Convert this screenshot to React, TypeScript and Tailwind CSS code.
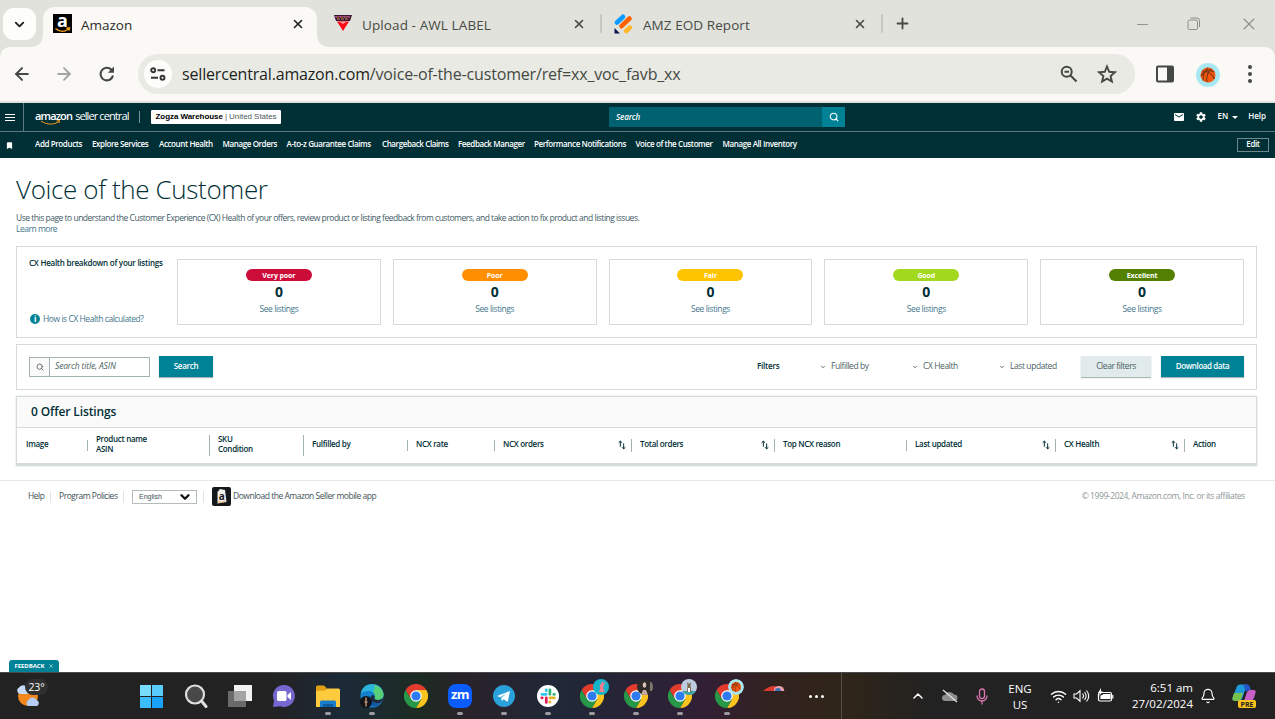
import { ReactNode } from 'react';
import { ArrowLeft, ArrowRight, Bell, ChevronDown, ChevronUp, Minus, Plus, Search, Wifi, X } from 'lucide-react';
import { MdBookmark, MdMail, MdSettings } from 'react-icons/md';

const navLinks = [
  { label: 'Add Products', width: 'w-[57px]' },
  { label: 'Explore Services', width: 'w-[67px]' },
  { label: 'Account Health', width: 'w-[63.5px]' },
  { label: 'Manage Orders', width: 'w-[64px]' },
  { label: 'A-to-z Guarantee Claims', width: 'w-[95.5px]' },
  { label: 'Chargeback Claims', width: 'w-[76px]' },
  { label: 'Feedback Manager', width: 'w-[76px]' },
  { label: 'Performance Notifications', width: 'w-[101.5px]' },
  { label: 'Voice of the Customer', width: 'w-[87px]' },
  { label: 'Manage All Inventory', width: 'w-[90px]' },
];

const healthCards = [
  { label: 'Very poor', color: 'bg-[#cc0c39]' },
  { label: 'Poor', color: 'bg-[#ff8f00]' },
  { label: 'Fair', color: 'bg-[#ffc400]' },
  { label: 'Good', color: 'bg-[#a2d81e]' },
  { label: 'Excellent', color: 'bg-[#538000]' },
];

const columns = [
  { lines: ['Image'], width: 'w-[70px]', bar: 'h-[11px]' },
  { lines: ['Product name', 'ASIN'], width: 'w-[122px]', bar: 'h-[21px]' },
  { lines: ['SKU', 'Condition'], width: 'w-[94px]', bar: 'h-[21px]' },
  { lines: ['Fulfilled by'], width: 'w-[104px]', bar: 'h-[11px]' },
  { lines: ['NCX rate'], width: 'w-[87px]', bar: 'h-[11px]' },
  { lines: ['NCX orders'], width: 'w-[137px]', bar: 'h-[13px]', sort: true },
  { lines: ['Total orders'], width: 'w-[143px]', bar: 'h-[13px]', sort: true },
  { lines: ['Top NCX reason'], width: 'w-[132px]', bar: 'h-[11px]' },
  { lines: ['Last updated'], width: 'w-[149px]', bar: 'h-[13px]', sort: true },
  { lines: ['CX Health'], width: 'w-[129px]', bar: 'h-[13px]', sort: true },
  { lines: ['Action'], width: 'w-[70px]' },
];

const AmazonIcon = () => (
  <div className="relative h-[19px] w-[19px] bg-black">
    <span className="absolute inset-x-0 -top-[5px] text-center text-[18px] leading-[22px] font-bold text-white">a</span>
    <svg className="absolute inset-0" width="19" height="19" viewBox="0 0 19 19" fill="none">
      <path d="M2.5 14.5c4 3.500 9 3.500 13 .500M13.500 14.200l3-.3-.6 2.8" stroke="#f7a01c" strokeWidth="1.4" />
    </svg>
  </div>
);

const LabelIcon = () => (
  <svg width="18" height="17" viewBox="0 0 18 17">
    <path d="M0 0h18l-2 6H2z" fill="#3b1630" />
    <path d="M2 2h14M3 4h12" stroke="#d58a54" strokeWidth="1" strokeDasharray="3 1" />
    <path d="M1 1.5h16" stroke="#b14ab0" strokeWidth="1" strokeDasharray="2 2" />
    <path d="M3 6.5h12L9 16z" fill="#fb0a16" />
    <path d="M6 7h6l-3 2z" fill="#fff" opacity=".6" />
  </svg>
);

const JotformIcon = () => (
  <svg width="19" height="20" viewBox="0 0 19 20" strokeLinecap="round">
    <path d="M3 8.5 9 2.8" stroke="#0a9bff" strokeWidth="4.6" />
    <path d="M7.5 12.2 15.5 4.5" stroke="#ff6100" strokeWidth="4.6" />
    <path d="M12.2 17 15.8 13.6" stroke="#ffb629" strokeWidth="4.6" />
    <path d="M.5 14v5.5H6z" fill="#0a1551" />
  </svg>
);

const Basketball = ({ size = 24 }: { size?: number }) => (
  <svg width={size} height={size} viewBox="0 0 24 24" fill="none">
    <circle cx="12" cy="12" r="12" fill="#a8e8f2" />
    <circle cx="12" cy="12" r="7.5" fill="#f4580f" />
    <path d="M6 8c5 0 11 3 12.5 8M12 4.5C8 9 6.500 13 7.200 17.500M15 5.500c-4 5-5 9-4 13.500M5 13c4-6 9-7 13-4" stroke="#7a3417" strokeWidth="1.100" />
  </svg>
);

const TabDivider = () => <div className="h-[19px] w-[2px] rounded bg-[#c6c7c2]" />;

const TabStrip = () => (
  <div className="flex h-[47px] bg-[#e1e2dc] text-[13.5px] text-[#474a45]">
    <div className="w-[43px] bg-[#faf9f5]">
      <div className="h-full rounded-br-[12px] bg-[#e1e2dc] pt-2 pl-[3px]">
        <div className="flex h-8 w-[33px] items-center justify-center rounded-[11px] bg-[#fdfdfa]">
          <ChevronDown size={15} strokeWidth={3} color="#20221f" />
        </div>
      </div>
    </div>
    <div className="flex w-[274px] pt-[7px]">
      <div className="flex w-full items-center rounded-t-[12px] bg-[#faf9f5] pr-3 pb-[7px] pl-[10px]">
        <AmazonIcon />
        <span className="mt-[3px] ml-[9px] text-[#2a2c29]">Amazon</span>
        <X className="ml-auto" size={14} strokeWidth={2.8} color="#20221f" />
      </div>
    </div>
    <div className="flex-1 bg-[#faf9f5]">
      <div className="flex h-full items-center rounded-bl-[12px] bg-[#e1e2dc]">
        <div className="flex w-[283px] items-center pl-[17px]">
          <LabelIcon />
          <span className="mt-[3px] ml-[10px] tracking-[0.1px]">Upload - AWL LABEL</span>
          <X className="mr-[14px] ml-auto" size={14} strokeWidth={2.8} />
        </div>
        <TabDivider />
        <div className="flex w-[279px] items-center pl-3">
          <JotformIcon />
          <span className="mt-[3px] ml-[10px] tracking-[0.07px]">AMZ EOD Report</span>
          <X className="mr-[14px] ml-auto" size={14} strokeWidth={2.8} />
        </div>
        <TabDivider />
        <Plus className="ml-[11px]" size={17} strokeWidth={2.6} />
        <div className="mt-px ml-auto flex items-center pr-[16px] text-[#8b8d88]">
          <Minus size={17} strokeWidth={1.3} />
          <svg className="ml-9" width="14" height="14" viewBox="0 0 14 14" fill="none" stroke="currentColor">
            <rect x="1" y="3" width="9.500" height="9.500" rx="1.500" />
            <path d="M3.500 1h6.500a2.500 2.500 0 0 1 2.500 2.500v6.500" />
          </svg>
          <X className="ml-[38px]" size={20} strokeWidth={1.3} />
        </div>
      </div>
    </div>
  </div>
);

const Toolbar = () => (
  <div className="bg-[#e1e2dc]">
    <div className="flex h-[54px] items-center rounded-t-[10px] bg-[#faf9f5] text-[#454943]">
      <ArrowLeft className="ml-[12px]" size={20} strokeWidth={2.4} />
      <ArrowRight className="ml-[22px]" size={20} strokeWidth={2.2} color="#a3a5a0" />
      <svg className="ml-[24px]" width="18" height="18" viewBox="0 0 18 18" fill="none">
        <path d="M15 10.500A6.300 6.300 0 1 1 13.300 4.600L15 6.300" stroke="currentColor" strokeWidth="2.100" />
        <path d="M16 1.500v6.300H9.800z" fill="currentColor" />
      </svg>
      <div className="ml-[22px] flex h-10 w-[997px] items-center rounded-full bg-[#e9eae4] pl-1.5">
        <div className="flex h-7 w-7 items-center justify-center rounded-full bg-[#fdfdfa]">
          <svg width="16" height="14" viewBox="0 0 16 14" fill="none" stroke="#333631" strokeWidth="1.900">
            <circle cx="3.200" cy="3.200" r="2" />
            <path d="M7.500 3.200h7M1 10.800h7" />
            <circle cx="12.500" cy="10.800" r="2" />
          </svg>
        </div>
        <span className="ml-[10px] text-[16px] tracking-[-0.17px] whitespace-nowrap">
          <span className="text-[#1d1f1b]">sellercentral.amazon.com</span>/voice-of-the-customer/ref=xx_voc_favb_xx
        </span>
        <svg className="ml-auto" width="18" height="18" viewBox="0 0 18 18" fill="none" stroke="currentColor" strokeWidth="2">
          <circle cx="6.700" cy="6.700" r="5" />
          <path d="m10.500 10.500 6 6M4.500 6.700h4.500" />
        </svg>
        <svg className="mr-[18px] ml-[19px]" width="20" height="20" viewBox="0 0 20 20" fill="none" stroke="currentColor" strokeWidth="1.900">
          <path d="m10 2.500 2.200 5.300 5.700.500-4.300 3.700 1.300 5.600-4.900-3-4.900 3 1.300-5.600-4.300-3.700 5.700-.500z" />
        </svg>
      </div>
      <svg className="ml-[21px]" width="18" height="18" viewBox="0 0 18 18">
        <rect x="1" y="1.500" width="16" height="15" rx="1" fill="none" stroke="currentColor" strokeWidth="2" />
        <path d="M11 1h6v16h-6z" fill="currentColor" />
      </svg>
      <div className="mt-[2px] ml-[22px]">
        <Basketball />
      </div>
      <div className="ml-[28px] flex flex-col gap-[3px]">
        <i className="h-1 w-1 rounded-full bg-[#454943]" />
        <i className="h-1 w-1 rounded-full bg-[#454943]" />
        <i className="h-1 w-1 rounded-full bg-[#454943]" />
      </div>
    </div>
    <div className="h-[2px] bg-[#e1e0dc]" />
  </div>
);

const SellerHeader = () => (
  <header className="bg-[#002f36] text-white">
    <div className="flex h-[29px] items-center border-b border-[#5f7a7e] text-[8px]">
      <div className="flex h-full w-6 items-center border-r border-[#5f7a7e] pl-[5px]">
        <div className="flex w-[10px] flex-col gap-[2px]">
          <i className="h-px bg-white" />
          <i className="h-px bg-white" />
          <i className="h-px bg-white" />
        </div>
      </div>
      <div className="relative mb-[2px] ml-[11px] w-[104px] text-[11px] leading-[14px] whitespace-nowrap">
        <span className="mr-[3px] font-semibold tracking-[-0.85px]">amazon</span>
        <span className="tracking-[-0.9px]">seller central</span>
        <svg className="absolute top-[11px] left-[5px]" width="22" height="6" viewBox="0 0 22 6" fill="none" stroke="#f59a1b">
          <path d="M1 1c6 4 13 4 18 .500M16.500 1l3-.500-.500 2.500" />
        </svg>
      </div>
      <div className="h-3 w-px bg-[#7d9295]" />
      <div className="ml-[11px] flex h-[14px] w-[130px] items-center justify-center rounded-[1px] bg-white font-['Liberation_Sans',sans-serif] text-[8px] tracking-[-0.05px] whitespace-nowrap text-[#4c5a5c]">
        <span className="mr-[2px] font-bold text-black">Zogza Warehouse</span> | United States
      </div>
      <div className="ml-[328px] flex h-5 w-[213px] items-center bg-[#006170] pl-[7px] font-semibold tracking-[-0.1px] italic">
        Search
      </div>
      <div className="flex h-5 w-[23px] items-center justify-center bg-[#008296]">
        <Search size={10} strokeWidth={2.6} />
      </div>
      <MdMail className="ml-auto" size={12} />
      <MdSettings className="ml-[10px]" size={12} />
      <span className="mb-[2px] ml-[10px] font-semibold">EN</span>
      <i className="ml-1 h-0 w-0 border-x-[3px] border-t-[3px] border-x-transparent border-t-white" />
      <span className="mr-[9px] mb-[2px] ml-[10px] font-semibold">Help</span>
    </div>
    <div className="flex h-[26px] items-center text-[8px] font-semibold tracking-[-0.39px] whitespace-nowrap">
      <div className="w-[35px] pl-[5px]">
        <MdBookmark size={9} />
      </div>
      {navLinks.map((link) => (
        <a key={link.label} className={`${link.width} shrink-0 pb-[2px]`}>
          {link.label}
        </a>
      ))}
      <button className="mr-[6px] ml-auto h-[14px] w-8 border border-[#6f888b] pb-[2px] leading-[10px]">Edit</button>
    </div>
  </header>
);

const HealthPanel = () => (
  <section className="flex h-[92px] border border-[#d5dbdb] p-3">
    <div className="flex w-[148px] flex-col justify-between text-[8px] leading-[10px] tracking-[-0.25px] whitespace-nowrap">
      <h2 className="-mt-px font-semibold">CX Health breakdown of your listings</h2>
      <a className="mb-px flex items-center text-[8.5px] tracking-[-0.45px] text-[#45788c]">
        <span className="mr-[3px] ml-px flex h-[10px] w-[10px] items-center justify-center rounded-full bg-[#008296] text-[8px] font-bold text-white">
          i
        </span>
        <span>How is CX Health calculated?</span>
      </a>
    </div>
    <div className="grid flex-1 grid-cols-5 gap-3">
      {healthCards.map((card) => (
        <div key={card.label} className="flex flex-col items-center border border-[#d5dbdb] pt-[9px]">
          <span
            className={`${card.color} h-3 w-[66px] rounded-full text-center text-[7px] leading-[13px] font-bold tracking-[-0.1px] text-white`}
          >
            {card.label}
          </span>
          <span className="mt-[3px] text-[14px] leading-[15px] font-bold">0</span>
          <a className="mt-[5px] text-[8.5px] leading-[10px] tracking-[-0.4px] text-[#45788c]">See listings</a>
        </div>
      ))}
    </div>
  </section>
);

const Filter = ({ label, width }: { label: string; width: string }) => (
  <div className={`flex items-center ${width}`}>
    <ChevronDown className="mr-[5px]" size={6} strokeWidth={3.500} />
    <span>{label}</span>
  </div>
);

const SearchPanel = () => (
  <section className="mt-[6px] flex h-[46px] items-center border border-[#d5dbdb] px-3 pb-px text-[8.5px] tracking-[-0.42px] whitespace-nowrap text-[#4c5f64]">
    <div className="flex h-5 w-[121px] items-center border border-[#a2b1b1]">
      <div className="flex h-full w-5 items-center justify-center border-r border-[#a2b1b1] bg-[#fafafa]">
        <Search size={8} strokeWidth={2.5} />
      </div>
      <span className="ml-[5px] text-[8.5px] tracking-[-0.15px] italic">Search title, ASIN</span>
    </div>
    <button className="ml-[9px] h-[21px] w-[54px] bg-[#008296] pb-px text-[8px] font-semibold tracking-[-0.25px] text-white shadow-[0_1px_1px_#aab7b8]">
      Search
    </button>
    <span className="mb-[2px] ml-auto w-[63px] text-[8px] font-semibold tracking-[-0.2px] text-[#002f36]">Filters</span>
    <Filter label="Fulfilled by" width="w-[92px]" />
    <Filter label="CX Health" width="w-[87px]" />
    <Filter label="Last updated" width="w-[82px]" />
    <button className="h-[21px] w-[70px] bg-[#e1ebec] shadow-[0_1px_1px_#aab7b8]">Clear filters</button>
    <button className="ml-[10px] h-[21px] w-[83px] bg-[#008296] pb-px text-[8px] font-semibold tracking-[-0.4px] text-white shadow-[0_1px_1px_#aab7b8]">
      Download data
    </button>
  </section>
);

const ListingsTable = () => (
  <section className="mt-[6px] border border-b-[3px] border-[#d5dbdb] shadow-[0_0_2px_#d5dbdb]">
    <h2 className="h-[31px] border-b border-[#d5dbdb] bg-[#fafafa] pl-[14px] text-[12px] leading-[30px] font-semibold tracking-[-0.12px]">
      0 Offer Listings
    </h2>
    <div className="flex h-[35px] items-center pl-[9px] text-[8px] leading-[10px] font-semibold tracking-[-0.3px] whitespace-nowrap">
      {columns.map((col) => (
        <div key={col.lines[0]} className={`${col.width} flex shrink-0 items-center`}>
          <div className={col.sort ? 'pb-[4px]' : 'pb-[3px]'}>
            {col.lines.map((line) => (
              <div key={line}>{line}</div>
            ))}
          </div>
          {col.sort && (
            <svg className="mr-[5px] mb-[2px] ml-auto" width="8" height="10" viewBox="0 0 7 9" fill="none" stroke="currentColor">
              <path d="M2 6V1M.500 2.500 2 1l1.500 1.500M5 3v5M3.500 6.500 5 8l1.500-1.500" strokeWidth=".9" />
            </svg>
          )}
          {col.bar && <i className={`${col.bar} ${col.sort ? '' : 'ml-auto'} mr-2 w-px bg-[#a2b1b1]`} />}
        </div>
      ))}
    </div>
  </section>
);

const Footer = () => (
  <footer className="mt-[14px] flex h-8 items-center border-t border-[#e7e9e9] pl-7 text-[8.5px] tracking-[-0.48px] whitespace-nowrap text-[#3f5357]">
    <span className="w-[22px]">Help</span>
    <i className="h-3 w-px bg-[#dfe3e3]" />
    <span className="ml-2 w-[64px]">Program Policies</span>
    <i className="h-3 w-px bg-[#dfe3e3]" />
    <div className="ml-2 flex h-[14px] w-[65px] items-center justify-between border border-[#b4bcbc] pr-[4px] pl-[6px] font-['Liberation_Sans',sans-serif] text-[7px] tracking-normal">
      <span className="mt-px">English</span>
      <ChevronDown size={14} strokeWidth={4} color="#111" />
    </div>
    <i className="ml-[6px] h-3 w-px bg-[#dfe3e3]" />
    <svg className="ml-2" width="19" height="19" viewBox="0 0 19 19">
      <rect width="19" height="19" rx="2" fill="#16191b" />
      <path d="M5.500 5 8 2l5 1 1.500 12-9 1.500z" fill="#f4f1ec" />
      <path d="M6 14.500c3 1.500 5 1 7.500-1" stroke="#e9a050" fill="none" />
      <text x="6.800" y="12.500" fontSize="10" fontWeight="700" fill="#16191b">
        a
      </text>
    </svg>
    <span className="ml-[2px]">Download the Amazon Seller mobile app</span>
    <span className="mr-[30px] mb-px ml-auto tracking-[-0.42px] text-[#8f9899]">
      © 1999-2024, Amazon.com, Inc. or its affiliates
    </span>
  </footer>
);

const ChromeLogo = () => (
  <svg width="24" height="24" viewBox="0 0 24 24">
    <path d="M1.600 6A12 12 0 0 1 22.400 6H12v6l-5.200 3z" fill="#e33b2e" />
    <path d="M22.400 6A12 12 0 0 1 12 24l5.200-9-5.200-3V6z" fill="#fcc31e" />
    <path d="M12 24A12 12 0 0 1 1.600 6l5.200 9 5.200-3 5.200 3z" fill="#279847" />
    <circle cx="12" cy="12" r="5.800" fill="#fff" />
    <circle cx="12" cy="12" r="4.600" fill="#2e7bf0" />
  </svg>
);

const ChromeProfile = ({ children }: { children: ReactNode }) => (
  <div className="relative">
    <ChromeLogo />
    <div className="absolute -top-[5px] left-[13px] h-4 w-4 overflow-hidden rounded-full">{children}</div>
  </div>
);

const TaskItem = ({ children, running, width = 'w-11' }: { children: ReactNode; running?: boolean; width?: string }) => (
  <div className={`relative flex h-full shrink-0 items-center justify-center ${width}`}>
    {children}
    {running && <i className="absolute bottom-[4px] h-[3px] w-[6px] rounded-full bg-[#9c9ca0]" />}
  </div>
);

const Taskbar = () => (
  <div className="flex h-[47px] items-center border-t border-[#4a4a4a] bg-[linear-gradient(90deg,#222_0,#222_270px,#1c2a38_345px,#1c2b22_420px,#29222a_465px,#202838_560px,#2a2237_650px,#321f35_705px,#32221f_770px,#2f2519_850px,#222_930px)] text-white">
    <div className="relative w-[129px] pl-[15px]">
      <svg width="34" height="26" viewBox="0 0 34 26">
        <circle cx="13" cy="13" r="10" fill="#f2881d" />
        <path d="M5 11a3.500 3.500 0 0 1-1-6.500A5 5 0 0 1 12 4l1 7z" fill="#c7dafb" />
        <path d="M13 23a3.500 3.500 0 0 1 .500-6 4.500 4.500 0 0 1 8 0 3.200 3.200 0 0 1 .500 6z" fill="#b5cdf6" />
      </svg>
      <span className="absolute -top-[4px] left-[25px] flex h-4 w-[23px] items-center justify-center rounded-full bg-[#303030] text-[10.5px] leading-4 tracking-[-0.2px]">
        23°
      </span>
    </div>
    <TaskItem>
      <div className="grid grid-cols-2 gap-px">
        <i className="h-[11px] w-[11px] bg-[#77dcff]" />
        <i className="h-[11px] w-[11px] bg-[#58ccfc]" />
        <i className="h-[11px] w-[11px] bg-[#3cbefb]" />
        <i className="h-[11px] w-[11px] bg-[#1aa2f8]" />
      </div>
    </TaskItem>
    <TaskItem>
      <svg className="ml-px" width="24" height="24" viewBox="0 0 24 24" fill="none" stroke="#dedede">
        <circle cx="11" cy="10.500" r="9" strokeWidth="2.200" fill="#484848" />
        <path d="m17.500 17 4.500 5.500" strokeWidth="3" strokeLinecap="round" />
      </svg>
    </TaskItem>
    <TaskItem>
      <svg className="ml-[2px]" width="24" height="24" viewBox="0 0 24 24">
        <rect x="6" y="1" width="18" height="16" fill="#f1f1f1" />
        <rect x="0" y="7" width="18" height="16" fill="#6a6a6a" />
        <rect x="6" y="7" width="12" height="10" fill="#a3a3a3" />
      </svg>
    </TaskItem>
    <TaskItem>
      <svg className="ml-[2px]" width="24" height="24" viewBox="0 0 24 24">
        <path d="M12 1a11 11 0 1 1-4 21.300L1 23l1-6.300A11 11 0 0 1 12 1z" fill="#7467cf" />
        <rect x="5" y="7" width="9.500" height="10" rx="1.500" fill="#fff" />
        <path d="m15.500 11 3.500-3v8l-3.500-3z" fill="#fff" />
      </svg>
    </TaskItem>
    <TaskItem running width="ml-px w-11">
      <svg width="24" height="23" viewBox="0 0 24 23">
        <path d="M0 2q0-1.500 1.500-1.500H8L10.500 3v4H0z" fill="#e1a112" />
        <path d="M0 6l9-.500L11 3.500h11.500Q24 3.500 24 5v17H0z" fill="#fdcb3d" />
        <path d="M4 22v-5q0-1.500 1.500-1.500h13q1.500 0 1.500 1.500v5z" fill="#1a7dcb" />
        <path d="M7 19h10v3H7z" fill="#0f5d9e" />
      </svg>
    </TaskItem>
    <TaskItem running>
      <svg width="24" height="24" viewBox="0 0 24 24">
        <circle cx="12" cy="12" r="11.500" fill="#1580cd" />
        <path d="M.8 9.500C3-3 21-3 23.400 9c1 5.500-4.400 8.500-8.900 6 2.500-4-1-8-6-8-3.500 0-6.500 1-7.700 2.500z" fill="#2bb5dc" />
        <path d="M14 .900c6 1 9.800 6 9.500 10-.3 5-5.500 6.100-9 4.100 1.500-3 0-5.500-1.500-7C15 5 15 3 14 .900z" fill="#58d078" />
        <path d="M14.500 15c3 1.500 6 1.200 8.200-1 .3 1.700-1 3.500-2.700 5-4.500 1.500-9-.500-9.500-5 0-1.500 1-3 2.500-3 1.800 1 2 2.500 1.500 4z" fill="#1f2b3a" />
        <path d="M9 12c-2.500 4-.5 9.500 5 10.500 3-.500 5-2 6-3.500-4 1-9.500-1-9.500-6z" fill="#135aa6" />
        <circle cx="6" cy="18" r="6" fill="#101418" />
        <path d="M6 13.500v9M4.500 18h3" stroke="#bd8f72" strokeWidth="1.500" />
      </svg>
    </TaskItem>
    <TaskItem>
      <ChromeLogo />
    </TaskItem>
    <TaskItem running>
      <div className="h-6 w-6 rounded-[8px] bg-[#0b5cff] text-center text-[13px] leading-[21px] font-bold tracking-[-0.5px]">
        zm
      </div>
    </TaskItem>
    <TaskItem running>
      <svg width="22" height="22" viewBox="0 0 22 22">
        <circle cx="11" cy="11" r="11" fill="#2aa1da" />
        <path d="m4 11 13-5-2.300 11-4-2.800-2 1.800-.400-3.300L14 8.200l-6.800 4z" fill="#fff" />
      </svg>
    </TaskItem>
    <TaskItem running>
      <svg width="22" height="22" viewBox="0 0 22 22" fill="none" strokeWidth="2.800" strokeLinecap="round">
        <circle cx="11" cy="11" r="11" fill="#fff" />
        <path d="M9.300 4.800v1M4.800 9.300h4.500" stroke="#36c5f0" />
        <path d="M16.800 9.300h.6M12.900 9.300V4.800" stroke="#2eb67d" />
        <path d="M12.900 16.800v.4M12.900 12.900h4.500" stroke="#ecb22e" />
        <path d="M4.800 12.900h.4M9.300 12.900v4.500" stroke="#e01e5a" />
      </svg>
    </TaskItem>
    <TaskItem running>
      <ChromeProfile>
        <svg width="16" height="16" viewBox="0 0 16 16">
          <path d="M0 0h16v16H0z" fill="#14b5cb" />
          <path d="M9.500 2.500 9 6M12 3.500 9.500 6.500" stroke="#f47c8c" strokeWidth="1.300" />
          <circle cx="8.500" cy="7" r="2" fill="#f47c8c" />
          <path d="M7.500 8h2.500l1.500 5H6z" fill="#f47c8c" />
        </svg>
      </ChromeProfile>
    </TaskItem>
    <TaskItem running>
      <ChromeProfile>
        <svg width="16" height="16" viewBox="0 0 16 16">
          <path d="M0 0h16v16H0z" fill="#302b2b" />
          <path d="M13 3h3v9h-3z" fill="#80766f" />
          <ellipse cx="7.500" cy="6" rx="1.800" ry="2.800" fill="#e0c4b8" />
          <path d="M4 16l2-5h3l2 5z" fill="#c9aca0" />
        </svg>
      </ChromeProfile>
    </TaskItem>
    <TaskItem running>
      <ChromeProfile>
        <svg width="16" height="16" viewBox="0 0 16 16">
          <path d="M0 0h16v16H0z" fill="#bdcce0" />
          <path d="M0 12h16v4H0z" fill="#3ba2a3" />
          <path d="M6 3l2 2 2-2-.5 4 1 6H6l.5-6z" fill="#7d6b50" />
          <path d="M7 9h2v4H7z" fill="#fff" />
        </svg>
      </ChromeProfile>
    </TaskItem>
    <TaskItem running width="w-[50px]">
      <ChromeProfile>
        <Basketball size={16} />
      </ChromeProfile>
    </TaskItem>
    <TaskItem width="w-[42px]">
      <svg className="mb-[15px] ml-[2px]" width="22" height="5" viewBox="0 0 22 5">
        <path d="M0 5Q11-5 22 5z" fill="#d93a31" />
        <ellipse cx="16" cy="4" rx="5" ry="4" fill="#e8a3ad" />
        <ellipse cx="15" cy="5" rx="3" ry="3" fill="#3d6fb5" />
      </svg>
    </TaskItem>
    <TaskItem width="w-[47px]">
      <div className="mr-[2px] flex gap-[3px]">
        <i className="h-[3px] w-[3px] rounded-full bg-white" />
        <i className="h-[3px] w-[3px] rounded-full bg-white" />
        <i className="h-[3px] w-[3px] rounded-full bg-white" />
      </div>
    </TaskItem>
    <div className="h-full w-px bg-[#55504a]" />
    <ChevronUp className="ml-[68px]" size={16} strokeWidth={2.2} />
    <svg className="ml-4" width="16" height="14" viewBox="0 0 16 14">
      <path d="M3 12a3 3 0 0 1 0-6 5 5 0 0 1 9-.500A3.300 3.300 0 0 1 13 12z" fill="#8e8e8e" />
      <path d="m1 1 14 12" stroke="#e2e2e2" strokeWidth="1.300" />
    </svg>
    <svg className="ml-[18px]" width="12" height="17" viewBox="0 0 12 17" fill="none" stroke="#db77ad" strokeWidth="1.300">
      <rect x="3.500" y="1" width="5" height="9.500" rx="2.500" />
      <path d="M1 7.500v.5a5 5 0 0 0 10 0v-.500M6 13v3.500" />
    </svg>
    <div className="mt-[2px] ml-[17px] w-[30px] text-center text-[11.500px] leading-4">
      <div>ENG</div>
      <div>US</div>
    </div>
    <Wifi className="ml-[15px]" size={17} strokeWidth={2} />
    <svg className="ml-[6px]" width="18" height="14" viewBox="0 0 18 14" fill="none" stroke="currentColor" strokeWidth="1.100">
      <path d="M1 5h2.500L7 1.800v10.400L3.500 9H1zM9.500 4.500q2 2.500 0 5M11.500 3q3.200 4 0 8M13.500 1.500q4.500 5.500 0 11" />
    </svg>
    <svg className="mb-[2px] ml-[6px]" width="17" height="15" viewBox="0 0 17 15" fill="none" stroke="currentColor" strokeWidth="1.200">
      <rect x="1.500" y="4.500" width="13" height="8.500" rx="1.500" />
      <path d="M4 10.500V8l3-1.500h6v4z" fill="currentColor" />
      <path d="M15.800 7v3.500" />
      <path d="M4 0 1 5h2L2 8l4-4.500H4z" fill="currentColor" stroke="none" />
    </svg>
    <div className="ml-auto text-right text-[11.500px] leading-4 whitespace-nowrap">
      <div>6:51 am</div>
      <div>27/02/2024</div>
    </div>
    <Bell className="ml-[7px]" size={16} strokeWidth={1.700} />
    <svg className="mr-[17px] ml-4" width="26" height="24" viewBox="0 0 26 24">
      <path d="M5 2q1-1.500 3-1.500h7L10 15q-1 2-3 2H3q-3 0-2.500-3z" fill="#1d9bd8" />
      <path d="M2 9h9l-2 6q-1 2-3 2H3q-3 0-2.500-3z" fill="#77c24c" />
      <path d="M12 17l3-9q1-2 3-2h4q2 0 1.500 3L22 14q-1 3-3 3z" fill="#c95fc9" />
      <path d="M11 .500h4q2 0 2.700 2L19 6h-2q-2 0-3 2z" fill="#2458c9" />
      <rect x="6" y="16" width="18" height="8" rx="2" fill="#fcc41c" />
      <text x="8.500" y="22.500" fontSize="7" fontWeight="700" fill="#222">
        PRE
      </text>
    </svg>
  </div>
);

const App = () => {
  return (
    <div className="flex h-[719px] w-[1275px] flex-col overflow-hidden bg-white font-['Open_Sans','Noto_Sans',sans-serif] text-[#002f36]">
      <TabStrip />
      <Toolbar />
      <SellerHeader />
      <main className="px-4 pr-[18px]">
        <h1 className="mt-[12px] text-[26px] leading-[38px] font-light tracking-[-0.37px]">Voice of the Customer</h1>
        <p className="mt-[4px] text-[8.5px] leading-[11px] tracking-[-0.49px] whitespace-nowrap text-[#3f5b66]">
          Use this page to understand the Customer Experience (CX) Health of your offers, review product or listing
          feedback from customers, and take action to fix product and listing issues.
        </p>
        <a className="mb-[12px] block text-[8.5px] leading-[11px] tracking-[-0.49px] text-[#45788c]">Learn more</a>
        <HealthPanel />
        <SearchPanel />
        <ListingsTable />
      </main>
      <Footer />
      <button className="mt-auto ml-[9px] flex h-3 w-[50px] items-center justify-center gap-[3px] rounded-t-[3px] bg-[#008296] text-[6px] font-bold tracking-[-0.05px] text-white">
        FEEDBACK
        <X size={6} strokeWidth={2} />
      </button>
      <Taskbar />
    </div>
  );
};

export default App;
